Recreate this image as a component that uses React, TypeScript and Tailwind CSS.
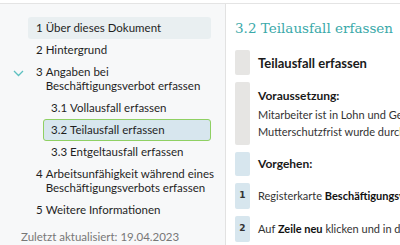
const toc = [
  { n: "1", lines: ["Über dieses Dokument"], level: 0, active: true },
  { n: "2", lines: ["Hintergrund"], level: 0 },
  { n: "3", lines: ["Angaben bei", "Beschäftigungsverbot erfassen"], level: 0, open: true },
  { n: "3.1", lines: ["Vollausfall erfassen"], level: 1 },
  { n: "3.2", lines: ["Teilausfall erfassen"], level: 1, current: true },
  { n: "3.3", lines: ["Entgeltausfall erfassen"], level: 1 },
  { n: "4", lines: ["Arbeitsunfähigkeit während eines", "Beschäftigungsverbots erfassen"], level: 0 },
  { n: "5", lines: ["Weitere Informationen"], level: 0 },
];

function Chevron() {
  return (
    <svg width="11" height="7" viewBox="0 0 11 7" className="absolute left-[-23px] top-[5px]">
      <path d="M1 1l4.5 4.5L10 1" fill="none" stroke="#5cc0c0" strokeWidth="1.3" />
    </svg>
  );
}

export default function App() {
  return (
    <div className="h-[245px] w-[400px] overflow-hidden bg-white pt-[3px]">
      <div className="flex h-full border-t border-[#e4e4e4]">
        <aside className="flex w-[226px] shrink-0 flex-col border-r border-[#e2e2e2] bg-[#f7f8f9] pl-[28px] pr-[14px] pt-[13px] font-['Lato',sans-serif] text-[11.5px] leading-[14px] text-[#1f1f1f]">
          {toc.map((t) => (
            <div
              key={t.n}
              className={
                t.level === 1
                  ? t.current
                    ? "ml-[15px] rounded-[3px] border border-[#8fd063] bg-[#d7e6ee] px-[7px] py-[3px]"
                    : "ml-[15px] px-2 py-1"
                  : t.active
                    ? "rounded-[3px] bg-[#e9eff1] px-2 py-1"
                    : "px-2 py-1"
              }
            >
              <div className="relative flex whitespace-nowrap">
                {t.open && <Chevron />}
                <span className="shrink-0 pr-[3px]">{t.n}</span>
                <span>
                  {t.lines.map((l) => (
                    <span key={l} className="block">
                      {l}
                    </span>
                  ))}
                </span>
              </div>
            </div>
          ))}
          <p className="ml-[-7px] mt-[9px] text-[#777]">Zuletzt aktualisiert: 19.04.2023</p>
        </aside>

        <main className="flex-1 overflow-hidden pl-[9px] pt-[13px] font-['Lato',sans-serif] text-[#1a1a1a]">
          <h1 className="whitespace-nowrap font-['DejaVu_Serif',serif] text-[13.5px] leading-[22px] text-[#3aa9a9]">
            3.2 Teilausfall erfassen
          </h1>
          <div className="mt-[11px] flex flex-col gap-[7px]">
            <div className="flex gap-2">
              <div className="h-[25px] w-[15px] shrink-0 rounded-[2px] bg-[#e6e5e3]" />
              <p className="whitespace-nowrap pt-[5px] text-[13px] font-bold leading-[16px]">Teilausfall erfassen</p>
            </div>
            <div className="flex gap-2">
              <div className="h-[63px] w-[15px] shrink-0 rounded-[2px] bg-[#e6e5e3]" />
              <div className="whitespace-nowrap pt-[6px]">
                <p className="text-[12px] font-bold leading-[16px]">Voraussetzung:</p>
                <p className="mt-[2px] text-[11px] leading-[17px] text-[#333]">
                  Mitarbeiter ist in Lohn und Gehalt erfasst.
                  <br />
                  Mutterschutzfrist wurde durch den Arzt bestätigt.
                </p>
              </div>
            </div>
            <div className="flex gap-2">
              <div className="h-[24px] w-[15px] shrink-0 rounded-[2px] bg-[#d7e6ee]" />
              <p className="pt-[4px] text-[12px] font-bold leading-[16px]">Vorgehen:</p>
            </div>
            <div className="flex items-center gap-2 whitespace-nowrap text-[11px] text-[#333]">
              <div className="flex h-[26px] w-[15px] shrink-0 items-center justify-center rounded-[2px] bg-[#d7e6ee] font-['DejaVu_Sans',sans-serif] text-[9px] font-bold">1</div>
              <p>
                Registerkarte <b className="text-[#111]">Beschäftigungsverbot</b> öffnen.
              </p>
            </div>
            <div className="flex items-center gap-2 whitespace-nowrap text-[11px] text-[#333]">
              <div className="flex h-[26px] w-[15px] shrink-0 items-center justify-center rounded-[2px] bg-[#d7e6ee] font-['DejaVu_Sans',sans-serif] text-[9px] font-bold">2</div>
              <p>
                Auf <b className="text-[#111]">Zeile neu</b> klicken und in den Feldern erfassen.
              </p>
            </div>
          </div>
        </main>
      </div>
    </div>
  );
}
